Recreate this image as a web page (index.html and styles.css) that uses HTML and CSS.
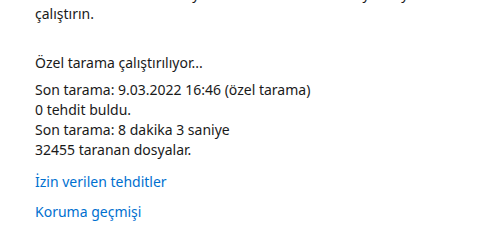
FILE: index.html
```html
<!DOCTYPE html>
<html lang="tr">
<head>
<meta charset="utf-8">
<link rel="stylesheet" href="styles.css">
</head>
<body>
<main class="page">
  <p class="intro"><span class="line">Tehditleri bulmak amacıyla tam bir virüs taraması ya da yeni tarama</span><span class="line">çalıştırın.</span></p>
  <p class="status">Özel tarama çalıştırılıyor...</p>
  <div class="details">
    <p>Son tarama: 9.03.2022 16:46 (özel tarama)</p>
    <p>0 tehdit buldu.</p>
    <p>Son tarama: 8 dakika 3 saniye</p>
    <p>32455 taranan dosyalar.</p>
  </div>
  <nav class="links">
    <a href="#">İzin verilen tehditler</a>
    <a href="#">Koruma geçmişi</a>
  </nav>
</main>
</body>
</html>
```
FILE: styles.css
```css
html, body {
  margin: 0;
  padding: 0;
  background: #ffffff;
  overflow: hidden;
}
.page {
  padding-left: 35px;
  font-family: "Noto Sans", "Open Sans", sans-serif;
  font-size: 14px;
  line-height: 20px;
  color: #1a1a1a;
}
p {
  margin: 0;
}
.intro {
  margin-top: -16px;
}
.line {
  display: block;
  white-space: nowrap;
}
.status {
  margin-top: 29px;
}
.details {
  margin-top: 7px;
}
.links {
  display: flex;
  flex-direction: column;
  align-items: flex-start;
  gap: 10px;
  margin-top: 12px;
}
.links a {
  color: #0070d0;
  text-decoration: none;
}
```
